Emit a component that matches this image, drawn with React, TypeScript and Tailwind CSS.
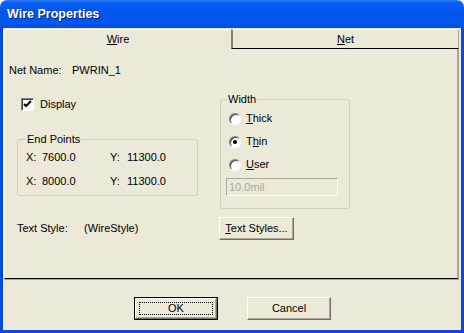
import React from "react";

const font = { fontFamily: '"Liberation Sans", Arial, sans-serif' };

function Radio({ checked }: { checked?: boolean }) {
  return (
    <div className="w-[12px] h-[12px] rounded-full border border-t-[#808080] border-l-[#808080] border-b-white border-r-white bg-white shadow-[inset_1px_1px_0_#404040] flex items-center justify-center">
      {checked && <div className="w-[4px] h-[4px] rounded-full bg-black" />}
    </div>
  );
}

function Btn3D({ children, w, def }: { children: React.ReactNode; w: string; def?: boolean }) {
  const inner = (
    <div className="w-full h-full border border-t-white border-l-white border-b-[#716f64] border-r-[#716f64] shadow-[inset_-1px_-1px_0_#aca899] bg-[#ece9d8] flex items-center justify-center p-[3px]">
      {def ? (
        <div className="w-full h-full border border-dotted border-black flex items-center justify-center">{children}</div>
      ) : (
        children
      )}
    </div>
  );
  return def ? (
    <div className={`${w} h-[23px] border border-black`}>{inner}</div>
  ) : (
    <div className={`${w} h-[23px]`}>{inner}</div>
  );
}

export default function App() {
  return (
    <div className="w-[464px] h-[333px] flex flex-col text-[11px] leading-[13px] text-black" style={font}>
      <div className="h-[28px] shrink-0 rounded-t-[7px] bg-[linear-gradient(to_bottom,#2e7cf8_0%,#0a5ef0_10%,#0054e8_45%,#0058ee_80%,#0a4cd8_100%)] pl-[7px] pt-[7px]">
        <span className="text-white font-bold text-[12.5px] leading-[15px] [text-shadow:1px_1px_#0a1a7a]">Wire Properties</span>
      </div>
      <div className="flex-1 flex flex-col bg-[#ece9d8] border-x-[3px] border-b-[3px] border-x-[#0b48dc] border-b-[#0b48dc] pt-[1px] pl-[1px] pr-[2px]">
        <div className="flex h-[20px] shrink-0">
          <div className="w-[227px] border-t border-l border-white rounded-tl-[3px] flex items-center justify-center">
            <span>
              <u>W</u>ire
            </span>
          </div>
          <div className="flex-1 border-t border-t-white border-l-2 border-l-[#808080] border-r border-r-[#aca899] border-b border-b-black rounded-tr-[3px] flex items-center justify-center">
            <span>
              <u>N</u>et
            </span>
          </div>
        </div>
        <div className="h-[230px] shrink-0 border-l border-l-white border-b border-b-black border-r-2 border-r-[#aca899] shadow-[0_1px_0_#aca899] flex flex-col">
          <div className="mt-[15px] ml-[4px] flex h-[13px]">
            <span className="w-[63px]">Net Name:</span>
            <span>PWRIN_1</span>
          </div>
          <div className="mt-[16px] flex">
            <div className="ml-[12px] w-[181px] flex flex-col">
              <div className="mt-[5px] pl-[4px] flex items-center gap-[6px] h-[13px]">
                <div className="w-[13px] h-[13px] bg-white border border-t-[#808080] border-l-[#808080] border-b-white border-r-white shadow-[inset_1px_1px_0_#404040] flex items-center justify-center">
                  <svg width="9" height="9" viewBox="0 0 9 9">
                    <path d="M1 4 L3 6 L8 1" stroke="black" strokeWidth="2" fill="none" />
                  </svg>
                </div>
                <span>Display</span>
              </div>
              <div className="relative mt-[28px] h-[57px] border border-[#d0d0bf] rounded-[3px] pt-[11px] pl-[8px] flex flex-col gap-[11px]">
                <span className="absolute -top-[7px] left-[8px] px-[1px] bg-[#ece9d8]">End Points</span>
                <div className="flex h-[13px]">
                  <span className="w-[16px]">X:</span>
                  <span className="w-[68px]">7600.0</span>
                  <span className="w-[17px]">Y:</span>
                  <span>11300.0</span>
                </div>
                <div className="flex h-[13px]">
                  <span className="w-[16px]">X:</span>
                  <span className="w-[68px]">8000.0</span>
                  <span className="w-[17px]">Y:</span>
                  <span>11300.0</span>
                </div>
              </div>
            </div>
            <div className="ml-[22px] mt-[6px] relative w-[130px] h-[110px] border border-[#d0d0bf] rounded-[3px] pt-[12px] flex flex-col">
              <span className="absolute -top-[7px] left-[6px] px-[1px] bg-[#ece9d8]">Width</span>
              <div className="pl-[8px] flex flex-col gap-[10px]">
                <div className="flex items-center gap-[5px] h-[13px]">
                  <Radio />
                  <span>
                    <u>T</u>hick
                  </span>
                </div>
                <div className="flex items-center gap-[5px] h-[13px]">
                  <Radio checked />
                  <span>
                    T<u>h</u>in
                  </span>
                </div>
                <div className="flex items-center gap-[5px] h-[13px]">
                  <Radio />
                  <span>
                    <u>U</u>ser
                  </span>
                </div>
              </div>
              <div className="mt-[7px] ml-[5px] w-[112px] h-[18px] border border-t-[#aca899] border-l-[#aca899] border-b-white border-r-white flex items-center pl-[2px] text-[#aca899]">
                10.0mil
              </div>
            </div>
          </div>
          <div className="mt-[8px] flex items-center">
            <div className="ml-[12px] w-[202px] flex">
              <span className="w-[67px]">Text Style:</span>
              <span>(WireStyle)</span>
            </div>
            <Btn3D w="w-[75px]">
              <span>
                <u>T</u>ext Styles...
              </span>
            </Btn3D>
          </div>
        </div>
        <div className="pt-[18px] flex justify-center gap-[29px] pl-[2px]">
          <Btn3D w="w-[84px]" def>
            <span>OK</span>
          </Btn3D>
          <Btn3D w="w-[84px]">
            <span>Cancel</span>
          </Btn3D>
        </div>
      </div>
    </div>
  );
}
